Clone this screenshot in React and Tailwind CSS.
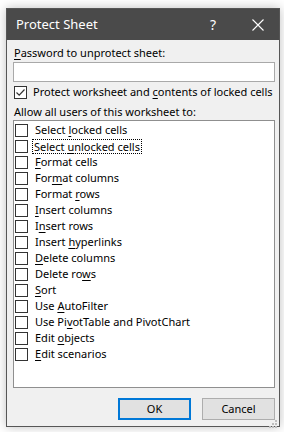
import React from 'react';

const font = { fontFamily: '"Noto Sans", "Open Sans", sans-serif' };

const items = [
  ['Select ', 'l', 'ocked cells'],
  ['Select ', 'u', 'nlocked cells'],
  ['', 'F', 'ormat cells'],
  ['For', 'm', 'at columns'],
  ['Format ', 'r', 'ows'],
  ['', 'I', 'nsert columns'],
  ['I', 'n', 'sert rows'],
  ['Insert ', 'h', 'yperlinks'],
  ['', 'D', 'elete columns'],
  ['Delete ro', 'w', 's'],
  ['', 'S', 'ort'],
  ['Use ', 'A', 'utoFilter'],
  ['Use Pi', 'v', 'otTable and PivotChart'],
  ['Edit ', 'o', 'bjects'],
  ['', 'E', 'dit scenarios'],
];

const Box = ({ checked }) => (
  <span className="w-[13px] h-[13px] border border-[#333333] bg-white flex items-center justify-center shrink-0">
    {checked && (
      <svg width="11" height="11" viewBox="0 0 11 11">
        <path d="M1.5 5.5 L4.2 8.2 L9.5 2.5" fill="none" stroke="#333333" strokeWidth="1.2" />
      </svg>
    )}
  </span>
);

const Label = ({ parts }) => (
  <span className="whitespace-nowrap">
    {parts[0]}
    <span className="underline underline-offset-2">{parts[1]}</span>
    {parts[2]}
  </span>
);

const App = () => {
  return (
    <div className="w-[284px] h-[432px] bg-white pl-[6px] pt-[8px] text-[11px] text-black" style={font}>
      <div className="w-[274px] h-[419px] border border-[#565656] bg-[#f0f0f0] flex flex-col shadow-[0_0_10px_rgba(0,0,0,0.25)]">
        <div className="h-[31px] bg-[#4a4a4a] text-white flex items-center shrink-0">
          <span className="ml-[9px] text-[13px]">Protect Sheet</span>
          <span className="ml-auto text-[14px] mr-[36px]">?</span>
          <svg width="12" height="12" viewBox="0 0 12 12" className="mr-[15px]">
            <path d="M0.5 0.5 L11.5 11.5 M11.5 0.5 L0.5 11.5" stroke="white" strokeWidth="1.1" />
          </svg>
        </div>
        <div className="pl-[6px] flex flex-col flex-1">
          <div className="h-[16px] mt-[5px] leading-[16px] pl-[1px]">
            <Label parts={['', 'P', 'assword to unprotect sheet:']} />
          </div>
          <div className="w-[262px] h-[20px] mt-[1px] border border-[#a9a9a9] bg-white" />
          <div className="h-[16px] mt-[2px] flex items-center gap-[6px] pl-[1px] leading-[16px]">
            <Box checked />
            <Label parts={['Protect worksheet and ', 'c', 'ontents of locked cells']} />
          </div>
          <div className="h-[16px] mt-[4px] leading-[16px] pl-[1px]">Allow all users of this worksheet to:</div>
          <div className="w-[262px] h-[268px] border border-[#8f8f8f] bg-white pt-[1px] pl-[1px]">
            {items.map((p, i) => (
              <div key={i} className="h-[16px] flex items-center gap-[7px] leading-[16px]">
                <Box />
                <span className={i === 1 ? 'outline outline-1 outline-dotted outline-black px-[1px] -ml-[2px] leading-[13px]' : ''}>
                  <Label parts={p} />
                </span>
              </div>
            ))}
          </div>
          <div className="flex justify-end gap-[11px] mt-[10px] pr-[4px]">
            <button className="w-[73px] h-[22px] border-2 border-[#0078d7] bg-[#e1e1e1] text-[11px]">OK</button>
            <button className="w-[73px] h-[22px] border border-[#adadad] bg-[#e1e1e1] text-[11px]">Cancel</button>
          </div>
          <div className="flex-1 flex justify-end items-end pr-[1px] pb-[1px]">
            <svg width="9" height="9" viewBox="0 0 9 9">
              <rect x="6" y="0" width="2" height="2" fill="#bdbdbd" />
              <rect x="3" y="3" width="2" height="2" fill="#bdbdbd" />
              <rect x="6" y="3" width="2" height="2" fill="#bdbdbd" />
              <rect x="0" y="6" width="2" height="2" fill="#bdbdbd" />
              <rect x="3" y="6" width="2" height="2" fill="#bdbdbd" />
              <rect x="6" y="6" width="2" height="2" fill="#bdbdbd" />
            </svg>
          </div>
        </div>
      </div>
    </div>
  );
};

export default App;
